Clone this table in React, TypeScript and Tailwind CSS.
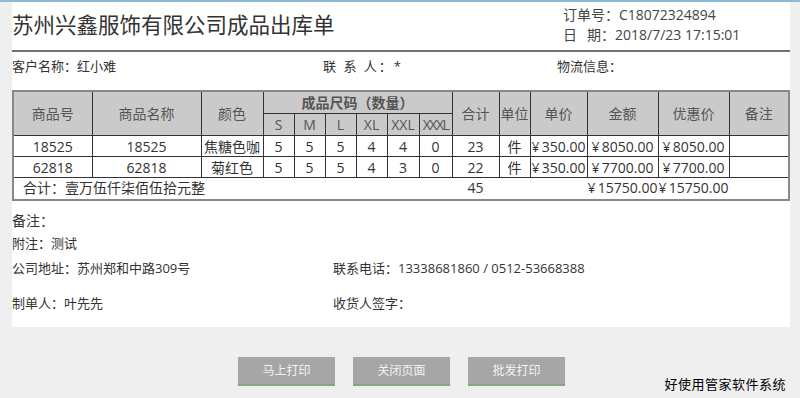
import React from 'react';

const rows = [
  { no: '18525', name: '18525', color: '焦糖色咖', sizes: ['5', '5', '5', '4', '4', '0'], total: '23', unit: '件', price: '¥\u2009350.00', amount: '¥\u20098050.00', discount: '¥\u20098050.00' },
  { no: '62818', name: '62818', color: '菊红色', sizes: ['5', '5', '5', '4', '3', '0'], total: '22', unit: '件', price: '¥\u2009350.00', amount: '¥\u20097700.00', discount: '¥\u20097700.00' },
];

const widths = [79, 109, 62, 31, 31, 31, 31, 32, 33, 47, 31, 57, 71, 71, 60];

const th = 'border border-[#333] bg-[#cacaca] text-[#555] text-[14px] p-0 text-center whitespace-nowrap';
const td = 'border border-[#333] text-[#333] text-[14px] p-0 text-center whitespace-nowrap';

export default function App() {
  return (
    <div
      className="w-[800px] h-[398px] bg-[#efefef] border-t-2 border-[#8cbad6] overflow-hidden text-[#333]"
      style={{ fontFamily: '"Open Sans", "Noto Sans CJK SC", sans-serif' }}
    >
      <div className="ml-[12px] w-[778px] h-[325px] bg-white">
        {/* header */}
        <div className="flex h-[48px]">
          <h1 className="text-[21.5px] leading-[28px] pt-[9px] text-[#333] font-normal">
            苏州兴鑫服饰有限公司成品出库单
          </h1>
          <div className="ml-[auto] w-[227px] pt-[3px] text-[14px] leading-[20px] text-[#444]">
            <div>订单号：C18072324894</div>
            <div>日<span className="ml-[10px]">期：2018/7/23 17:15:01</span></div>
          </div>
        </div>
        <div className="h-[2px] bg-[#707070]" />

        <div className="grid grid-cols-[311px_234px_1fr] h-[30px] items-center text-[13px]">
          <div>客户名称：红小难</div>
          <div className="tracking-[2px]">联 系 人：*</div>
          <div>物流信息：</div>
        </div>

        {/* table */}
        <table className="mt-[8px] w-[776px] table-fixed border-collapse border-2 border-[#888]">
          <colgroup>
            {widths.map((w, i) => (
              <col key={i} style={{ width: w }} />
            ))}
          </colgroup>
          <thead>
            <tr className="h-[22px]">
              <th rowSpan={2} className={th + ' font-normal'}>商品号</th>
              <th rowSpan={2} className={th + ' font-normal'}>商品名称</th>
              <th rowSpan={2} className={th + ' font-normal'}>颜色</th>
              <th colSpan={6} className={th + ' font-bold'}>成品尺码（数量）</th>
              <th rowSpan={2} className={th + ' font-normal'}>合计</th>
              <th rowSpan={2} className={th + ' font-normal'}>单位</th>
              <th rowSpan={2} className={th + ' font-normal'}>单价</th>
              <th rowSpan={2} className={th + ' font-normal'}>金额</th>
              <th rowSpan={2} className={th + ' font-normal'}>优惠价</th>
              <th rowSpan={2} className={th + ' font-normal'}>备注</th>
            </tr>
            <tr className="h-[21px]">
              {['S', 'M', 'L', 'XL', 'XXL'].map(s => (
                <th key={s} className={th + ' font-normal'}>{s}</th>
              ))}
              <th className={th + ' font-normal tracking-[-1.5px] overflow-hidden'}>XXXL</th>
            </tr>
          </thead>
          <tbody>
            {rows.map((r, i) => (
              <tr key={i} className="h-[21px] leading-[19px]">
                <td className={td}>{r.no}</td>
                <td className={td}>{r.name}</td>
                <td className={td}>{r.color}</td>
                {r.sizes.map((s, j) => (
                  <td key={j} className={td}>{s}</td>
                ))}
                <td className={td}>{r.total}</td>
                <td className={td}>{r.unit}</td>
                <td className={td}>{r.price}</td>
                <td className={td}>{r.amount}</td>
                <td className={td}>{r.discount}</td>
                <td className={td}></td>
              </tr>
            ))}
            <tr className="h-[22px] text-[14px] leading-[20px]">
              <td colSpan={9} className="p-0 pl-[9px] text-left">合计：壹万伍仟柒佰伍拾元整</td>
              <td className="p-0 text-center">45</td>
              <td className="p-0" />
              <td className="p-0" />
              <td className="p-0 text-center whitespace-nowrap">¥{'\u2009'}15750.00</td>
              <td className="p-0 text-center whitespace-nowrap">¥{'\u2009'}15750.00</td>
              <td className="p-0" />
            </tr>
          </tbody>
        </table>

        {/* notes */}
        <div className="mt-[10px] text-[14px] leading-[20px]">备注：</div>
        <div className="text-[13px] leading-[24px]">附注：测试</div>
        <div className="grid grid-cols-[321px_1fr] text-[13px] leading-[26px]">
          <div>公司地址：苏州郑和中路309号</div>
          <div>联系电话：13338681860 / 0512-53668388</div>
        </div>
        <div className="mt-[9px] grid grid-cols-[321px_1fr] text-[13px] leading-[26px]">
          <div>制单人：叶先先</div>
          <div>收货人签字：</div>
        </div>
      </div>

      {/* bottom */}
      <div className="flex items-start mt-[30px] pl-[238px]">
        <div className="flex gap-[18px]">
          {['马上打印', '关闭页面', '批发打印'].map(b => (
            <button
              key={b}
              className="w-[97px] h-[29px] bg-[#a6a6a6] text-[#f2f2f2] text-[12px] border-b-2 border-[#7fa883]"
            >
              {b}
            </button>
          ))}
        </div>
        <div className="ml-auto mr-[14px] mt-[19px] text-[13px] leading-[16px] text-black tracking-[0.5px]">
          好使用管家软件系统
        </div>
      </div>
    </div>
  );
}
